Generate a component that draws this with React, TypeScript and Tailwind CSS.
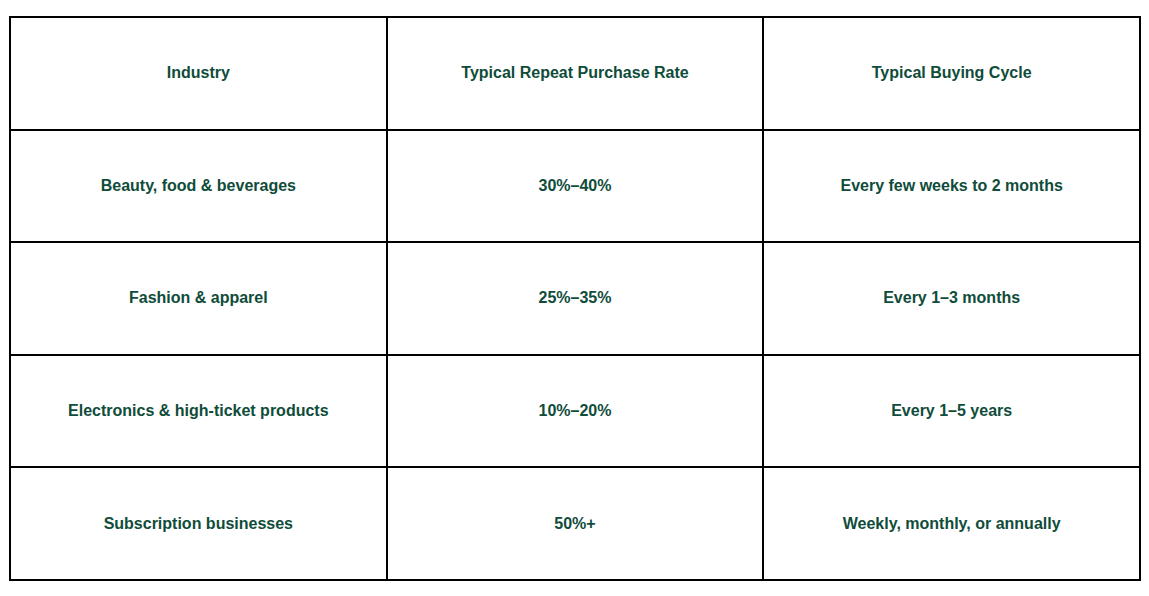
const rows: [string, string, string][] = [
  ["Industry", "Typical Repeat Purchase Rate", "Typical Buying Cycle"],
  ["Beauty, food & beverages", "30%–40%", "Every few weeks to 2 months"],
  ["Fashion & apparel", "25%–35%", "Every 1–3 months"],
  ["Electronics & high-ticket products", "10%–20%", "Every 1–5 years"],
  ["Subscription businesses", "50%+", "Weekly, monthly, or annually"],
];

export default function App() {
  return (
    <div className="min-h-[596px] w-full bg-white pl-[9px] pt-[16px] font-['Liberation_Sans',Arial,sans-serif]">
      <table className="w-[1132px] border-collapse border-2 border-black">
        <tbody>
          {rows.map((row, i) => (
            <tr key={i} className="h-[112.6px]">
              {row.map((cell, j) => (
                <td
                  key={j}
                  className="w-1/3 border-2 border-black text-center align-middle text-[16px] font-bold text-[#0f4c3a]"
                >
                  {cell}
                </td>
              ))}
            </tr>
          ))}
        </tbody>
      </table>
    </div>
  );
}
